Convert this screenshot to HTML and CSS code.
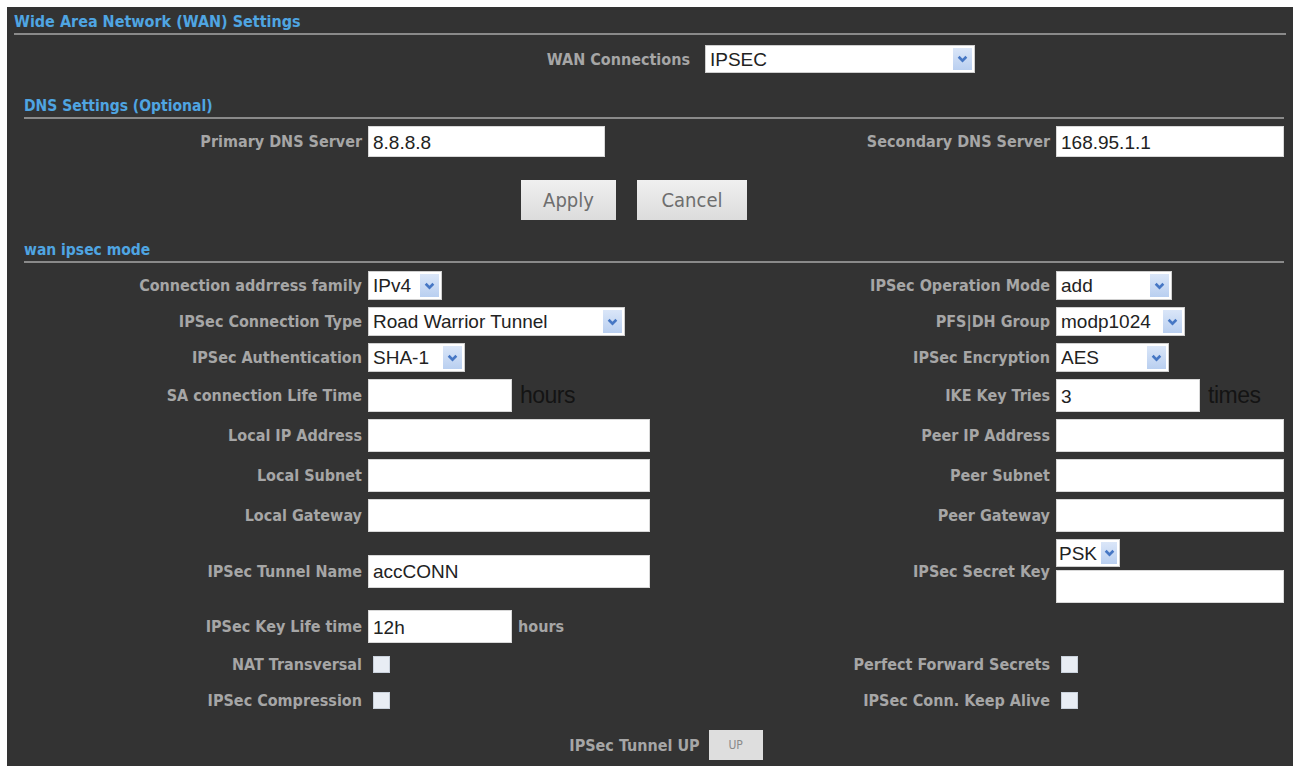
FILE: index.html
```html
<!DOCTYPE html>
<html lang="en">
<head>
<meta charset="UTF-8">
<meta name="viewport" content="width=device-width, initial-scale=1.0">
<title>WAN Settings</title>
<link rel="stylesheet" href="styles.css">
</head>
<body>
<div class="panel">
  <h1 class="title">Wide Area Network (WAN) Settings</h1>

  <div class="wan-row">
    <label class="lbl" for="wanType">WAN Connections</label>
    <span class="dd dd-wan">
      <select id="wanType"><option>IPSEC</option><option>DHCP</option><option>PPPoE</option></select>
      <span class="arr"><svg viewBox="0 0 10 7"><path d="M1.5 1.5 L5 5 L8.5 1.5"/></svg></span>
    </span>
  </div>

  <h2 class="sub">DNS Settings (Optional)</h2>
  <div class="form-grid dns">
    <label class="lbl">Primary DNS Server</label>
    <div class="fld"><input class="txt w-dns" type="text" value="8.8.8.8"></div>
    <label class="lbl">Secondary DNS Server</label>
    <div class="fld"><input class="txt w-full" type="text" value="168.95.1.1"></div>
  </div>

  <div class="actions">
    <button class="btn btn-apply">Apply</button>
    <button class="btn btn-cancel">Cancel</button>
  </div>

  <h2 class="sub sub-ipsec">wan ipsec mode</h2>
  <div class="form-grid ipsec">
    <label class="lbl">Connection addrress family</label>
    <div class="fld">
      <span class="dd dd-ipv4"><select><option>IPv4</option><option>IPv6</option></select><span class="arr"><svg viewBox="0 0 10 7"><path d="M1.5 1.5 L5 5 L8.5 1.5"/></svg></span></span>
    </div>
    <label class="lbl">IPSec Operation Mode</label>
    <div class="fld">
      <span class="dd dd-add"><select><option>add</option><option>route</option><option>start</option></select><span class="arr"><svg viewBox="0 0 10 7"><path d="M1.5 1.5 L5 5 L8.5 1.5"/></svg></span></span>
    </div>

    <label class="lbl">IPSec Connection Type</label>
    <div class="fld">
      <span class="dd dd-type"><select><option>Road Warrior Tunnel</option><option>Site to Site Tunnel</option></select><span class="arr"><svg viewBox="0 0 10 7"><path d="M1.5 1.5 L5 5 L8.5 1.5"/></svg></span></span>
    </div>
    <label class="lbl">PFS|DH Group</label>
    <div class="fld">
      <span class="dd dd-modp"><select><option>modp1024</option><option>modp1536</option><option>modp2048</option></select><span class="arr"><svg viewBox="0 0 10 7"><path d="M1.5 1.5 L5 5 L8.5 1.5"/></svg></span></span>
    </div>

    <label class="lbl">IPSec Authentication</label>
    <div class="fld">
      <span class="dd dd-sha"><select><option>SHA-1</option><option>MD5</option></select><span class="arr"><svg viewBox="0 0 10 7"><path d="M1.5 1.5 L5 5 L8.5 1.5"/></svg></span></span>
    </div>
    <label class="lbl">IPSec Encryption</label>
    <div class="fld">
      <span class="dd dd-aes"><select><option>AES</option><option>3DES</option></select><span class="arr"><svg viewBox="0 0 10 7"><path d="M1.5 1.5 L5 5 L8.5 1.5"/></svg></span></span>
    </div>

    <label class="lbl">SA connection Life Time</label>
    <div class="fld"><input class="txt w-short" type="text" value=""><span class="unit-big">hours</span></div>
    <label class="lbl">IKE Key Tries</label>
    <div class="fld"><input class="txt w-short" type="text" value="3"><span class="unit-big">times</span></div>

    <label class="lbl">Local IP Address</label>
    <div class="fld"><input class="txt w-long" type="text"></div>
    <label class="lbl">Peer IP Address</label>
    <div class="fld"><input class="txt w-full" type="text"></div>

    <label class="lbl">Local Subnet</label>
    <div class="fld"><input class="txt w-long" type="text"></div>
    <label class="lbl">Peer Subnet</label>
    <div class="fld"><input class="txt w-full" type="text"></div>

    <label class="lbl">Local Gateway</label>
    <div class="fld"><input class="txt w-long" type="text"></div>
    <label class="lbl">Peer Gateway</label>
    <div class="fld"><input class="txt w-full" type="text"></div>

    <label class="lbl">IPSec Tunnel Name</label>
    <div class="fld"><input class="txt w-long" type="text" value="accCONN"></div>
    <label class="lbl">IPSec Secret Key</label>
    <div class="fld stack">
      <span class="dd dd-psk"><select><option>PSK</option><option>RSA</option></select><span class="arr"><svg viewBox="0 0 10 7"><path d="M1.5 1.5 L5 5 L8.5 1.5"/></svg></span></span>
      <input class="txt w-full" type="password">
    </div>

    <label class="lbl">IPSec Key Life time</label>
    <div class="fld"><input class="txt w-short" type="text" value="12h"><span class="unit">hours</span></div>
    <div></div>
    <div></div>

    <label class="lbl">NAT Transversal</label>
    <div class="fld"><input class="chk" type="checkbox"></div>
    <label class="lbl">Perfect Forward Secrets</label>
    <div class="fld"><input class="chk" type="checkbox"></div>

    <label class="lbl">IPSec Compression</label>
    <div class="fld"><input class="chk" type="checkbox"></div>
    <label class="lbl">IPSec Conn. Keep Alive</label>
    <div class="fld"><input class="chk" type="checkbox"></div>
  </div>

  <div class="tunnel-row">
    <label class="lbl">IPSec Tunnel UP</label>
    <button class="btn-up">UP</button>
  </div>
</div>
</body>
</html>
```

FILE: styles.css
```css
body {
  margin: 0;
  background-color: #fff;
  font-family: "DejaVu Sans Condensed", "DejaVu Sans", sans-serif;
}

.panel {
  margin: 7px;
  width: 1286px;
  box-sizing: border-box;
  padding: 5px 7px 6px;
  background-color: #333;
}

.title {
  margin: 0;
  padding-bottom: 1px;
  font-size: 16px;
  line-height: 20px;
  font-weight: bold;
  color: #4fa5e2;
  border-bottom: 2px solid #8a8a8a;
}

.sub {
  margin: 23px 2px 0 10px;
  padding-bottom: 1px;
  font-size: 15.5px;
  line-height: 20px;
  font-weight: bold;
  color: #4fa5e2;
  border-bottom: 2px solid #8a8a8a;
}

.sub-ipsec {
  margin-top: 20px;
}

.lbl {
  text-align: right;
  font-size: 16px;
  font-weight: bold;
  color: #a6a6a6;
  white-space: nowrap;
}

.wan-row {
  display: grid;
  grid-template-columns: 676px auto;
  column-gap: 15px;
  align-items: center;
  margin-top: 10px;
}

.form-grid {
  display: grid;
  grid-template-columns: 348px 292px 1fr 230px;
  column-gap: 6px;
  row-gap: 7px;
  align-items: center;
}

.dns {
  margin-top: 7px;
}

.ipsec {
  margin-top: 8px;
}

.fld {
  display: flex;
  align-items: center;
}

.stack {
  flex-direction: column;
  align-items: flex-start;
  gap: 3px;
}

/* text boxes */
.txt {
  box-sizing: border-box;
  height: 33px;
  margin: 0;
  padding: 2px 4px 0;
  border: 1px solid #d8d8d8;
  background: #fff;
  font-family: "Liberation Sans", Arial, sans-serif;
  font-size: 19px;
  color: #222;
  outline: none;
}

.w-dns { width: 237px; height: 31px; }
.w-short { width: 144px; }
.w-long { width: 282px; }
.w-full { width: 228px; }

.dns .w-full { height: 31px; }

.unit-big {
  margin-left: 8px;
  font-family: "Liberation Sans", Arial, sans-serif;
  font-size: 23px;
  color: #141414;
  letter-spacing: -0.5px;
}

.unit {
  margin-left: 6px;
  font-size: 16px;
  font-weight: bold;
  color: #a6a6a6;
}

/* dropdowns */
.dd {
  display: inline-flex;
  box-sizing: border-box;
  height: 29px;
  padding: 2px;
  background: #fff;
  border: 1px solid #cfcfcf;
}

.dd select {
  flex: 1;
  min-width: 0;
  margin: 0;
  padding: 0 0 0 2px;
  border: none;
  background: transparent;
  font-family: "Liberation Sans", Arial, sans-serif;
  font-size: 19px;
  color: #222;
  appearance: none;
  -webkit-appearance: none;
  outline: none;
}

.dd .arr {
  width: 19px;
  display: flex;
  align-items: center;
  justify-content: center;
  background: linear-gradient(#dae6f8, #b9cff0);
}

.dd .arr svg {
  width: 11px;
  height: 8px;
  fill: none;
  stroke: #4677c4;
  stroke-width: 2.4;
}

.dd-wan { width: 270px; height: 28px; }
.dd-ipv4 { width: 74px; }
.dd-type { width: 257px; }
.dd-sha { width: 97px; }
.dd-add { width: 116px; }
.dd-modp { width: 129px; }
.dd-aes { width: 113px; }
.dd-psk { width: 64px; height: 28px; }

.dd-psk select { padding-left: 0; }
.dd-psk .arr { width: 16px; }

/* checkboxes */
.chk {
  appearance: none;
  -webkit-appearance: none;
  width: 17px;
  height: 17px;
  margin: 6px 0 6px 5px;
  background: #e8edf4;
  border: 1px solid #c9d1db;
}

/* buttons */
.actions {
  display: flex;
  justify-content: center;
  gap: 21px;
  margin-top: 23px;
  padding-right: 32px;
}

.btn {
  height: 40px;
  border: none;
  background: linear-gradient(#f0f0f0, #dcdcdc);
  font-family: "DejaVu Sans Condensed", "DejaVu Sans", sans-serif;
  font-size: 20px;
  color: #6e6e6e;
}

.btn-apply { width: 95px; }
.btn-cancel { width: 110px; }

.tunnel-row {
  display: flex;
  justify-content: center;
  align-items: center;
  gap: 9px;
  margin-top: 15px;
  padding-left: 32px;
}

.btn-up {
  width: 54px;
  height: 30px;
  border: none;
  background: #dedede;
  font-family: "DejaVu Sans Condensed", "DejaVu Sans", sans-serif;
  font-size: 12px;
  color: #8a8a8a;
}
```
